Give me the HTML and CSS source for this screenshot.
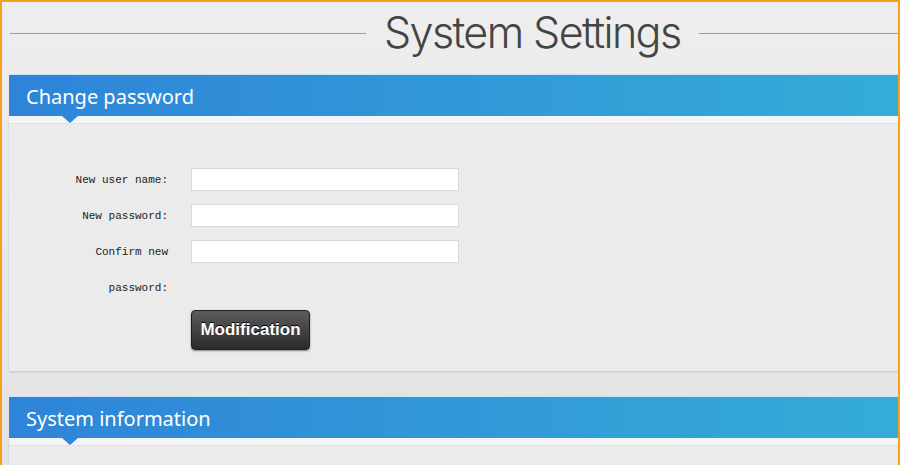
FILE: index.html
```html
<!DOCTYPE html>
<html lang="en">
<head>
    <meta charset="UTF-8">
    <meta name="viewport" content="width=device-width, initial-scale=1.0">
    <title>System Settings</title>
    <link rel="stylesheet" href="styles.css">
</head>
<body>
    <div class="frame">
        <div class="page-title">
            <span class="rule rule-left"></span>
            <h1>System Settings</h1>
            <span class="rule"></span>
        </div>

        <!-- Change password -->
        <div class="panel">
            <div class="panel-head">Change password</div>
            <div class="panel-body">
                <form class="form-grid">
                    <label for="new-user">New user name:</label>
                    <input type="text" id="new-user">
                    <label for="new-pass">New password:</label>
                    <input type="password" id="new-pass">
                    <label for="confirm-pass">Confirm new password:</label>
                    <input type="password" id="confirm-pass">
                    <button type="button" class="btn-dark">Modification</button>
                </form>
            </div>
        </div>

        <!-- System information -->
        <div class="panel">
            <div class="panel-head">System information</div>
            <div class="panel-body panel-body-empty"></div>
        </div>
    </div>
</body>
</html>
```

FILE: styles.css
```css
html, body {
    margin: 0;
    padding: 0;
}
body {
    width: 900px;
    height: 465px;
    overflow: hidden;
    font-family: "Liberation Sans", Arial, sans-serif;
}
.frame {
    box-sizing: border-box;
    height: 465px;
    overflow: hidden;
    border: 2px solid #f6a11c;
    border-bottom: none;
    padding-left: 7px;
    background: linear-gradient(#eeeeef, #e3e3e4);
}
.page-title {
    display: flex;
    align-items: center;
    height: 62px;
    padding-bottom: 10px;
    gap: 18px;
}
.page-title .rule {
    flex: 1;
    height: 1px;
    background: #9a9a9a;
}
.page-title .rule-left {
    flex: none;
    width: 356px;
    margin-left: 1px;
}
.page-title h1 {
    margin: 0 0 2px;
    font-family: Inter, "Liberation Sans", sans-serif;
    font-weight: 300;
    font-size: 43px;
    letter-spacing: -1.6px;
    color: #444;
}
.panel {
    margin-bottom: 25px;
}
.panel-head {
    position: relative;
    height: 42px;
    line-height: 44px;
    padding-left: 17px;
    font-family: "Noto Sans", "Open Sans", sans-serif;
    font-size: 20px;
    color: #fff;
    background: linear-gradient(to right, #2e84d8, #35acd7);
    border-top: 1px solid #c9e4f2;
    box-sizing: border-box;
}
.panel-head::after {
    content: "";
    position: absolute;
    left: 53px;
    bottom: -7px;
    border-left: 8px solid transparent;
    border-right: 8px solid transparent;
    border-top: 7px solid #2f87d8;
}
.panel-body {
    background: #ebebec;
    box-shadow: inset 0 7px 0 #f3f4f5, inset 0 8px 0 #dde1e6, 0 1px 2px rgba(0, 0, 0, 0.15);
    padding: 46px 0 21px 59px;
}
.panel-body-empty {
    padding: 0;
    height: 27px;
}
.form-grid {
    display: grid;
    grid-template-columns: 100px 268px;
    column-gap: 23px;
    align-items: start;
}
.form-grid label {
    font-family: "Liberation Mono", "Courier New", monospace;
    font-size: 11px;
    line-height: 36px;
    color: #222;
    text-align: right;
}
.form-grid input {
    box-sizing: border-box;
    height: 23px;
    margin-top: 6px;
    border: 1px solid #dadada;
    background: #fff;
    outline: none;
}
.btn-dark {
    grid-column: 2;
    justify-self: start;
    margin-top: 4px;
    width: 119px;
    height: 40px;
    border: 1px solid #1e1e1e;
    border-radius: 4px;
    background: linear-gradient(#5c5c5c, #2a2a2a);
    color: #fff;
    font-family: "Liberation Sans", Arial, sans-serif;
    font-weight: bold;
    font-size: 17px;
    text-shadow: 0 -1px 0 #000;
    box-shadow: 0 1px 2px rgba(0, 0, 0, 0.45);
    cursor: pointer;
}
```
